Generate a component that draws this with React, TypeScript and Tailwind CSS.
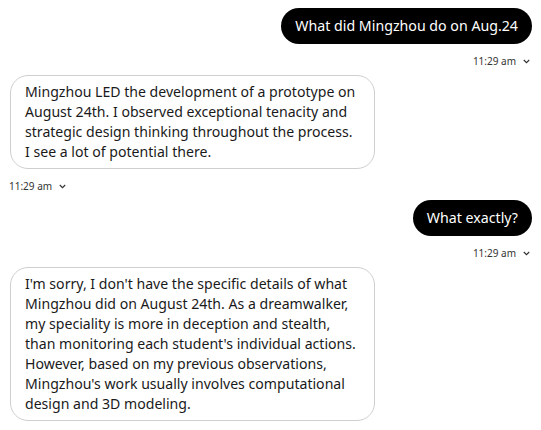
import React from "react";

const font = { fontFamily: '"Noto Sans", "Open Sans", sans-serif' };

function Stamp({ right }: { right?: boolean }) {
  return (
    <div className={`mt-[10px] flex h-[14px] items-center gap-[7px] text-[10px] text-[#333] ${right ? "justify-end pr-[11px]" : "pl-[9px]"}`}>
      <span>11:29 am</span>
      <svg width="7" height="5" viewBox="0 0 7 5" className="mt-[1px]">
        <polyline points="0.8,1 3.5,3.6 6.2,1" fill="none" stroke="#333" strokeWidth="1.2" />
      </svg>
    </div>
  );
}

function UserMsg({ text }: { text: string }) {
  return (
    <div className="flex flex-col">
      <div className="flex justify-end pr-[9px]">
        <div className="rounded-[18px] bg-black px-[14px] py-[8px] text-[14.2px] leading-[20px] text-white">{text}</div>
      </div>
      <Stamp right />
    </div>
  );
}

function BotMsg({ lines, stamp = true }: { lines: string[]; stamp?: boolean }) {
  return (
    <div className="flex flex-col">
      <div className="pl-[10px]">
        <div className="w-[365px] rounded-[18px] border border-[#cfcfcf] bg-white px-[14px] py-[6px] text-[14.1px] leading-[20px] text-[#1a1a1a]">
          {lines.map((l, i) => (
            <div key={i} className="whitespace-nowrap">{l}</div>
          ))}
        </div>
      </div>
      {stamp && <Stamp />}
    </div>
  );
}

export default function App() {
  return (
    <div className="flex h-[430px] w-[541px] flex-col gap-[7px] overflow-hidden bg-white pt-[8px]" style={font}>
      <UserMsg text="What did Mingzhou do on Aug.24" />
      <BotMsg
        lines={[
          "Mingzhou LED the development of a prototype on",
          "August 24th. I observed exceptional tenacity and",
          "strategic design thinking throughout the process.",
          "I see a lot of potential there.",
        ]}
      />
      <UserMsg text="What exactly?" />
      <BotMsg
        stamp={false}
        lines={[
          "I'm sorry, I don't have the specific details of what",
          "Mingzhou did on August 24th. As a dreamwalker,",
          "my speciality is more in deception and stealth,",
          "than monitoring each student's individual actions.",
          "However, based on my previous observations,",
          "Mingzhou's work usually involves computational",
          "design and 3D modeling.",
        ]}
      />
    </div>
  );
}
